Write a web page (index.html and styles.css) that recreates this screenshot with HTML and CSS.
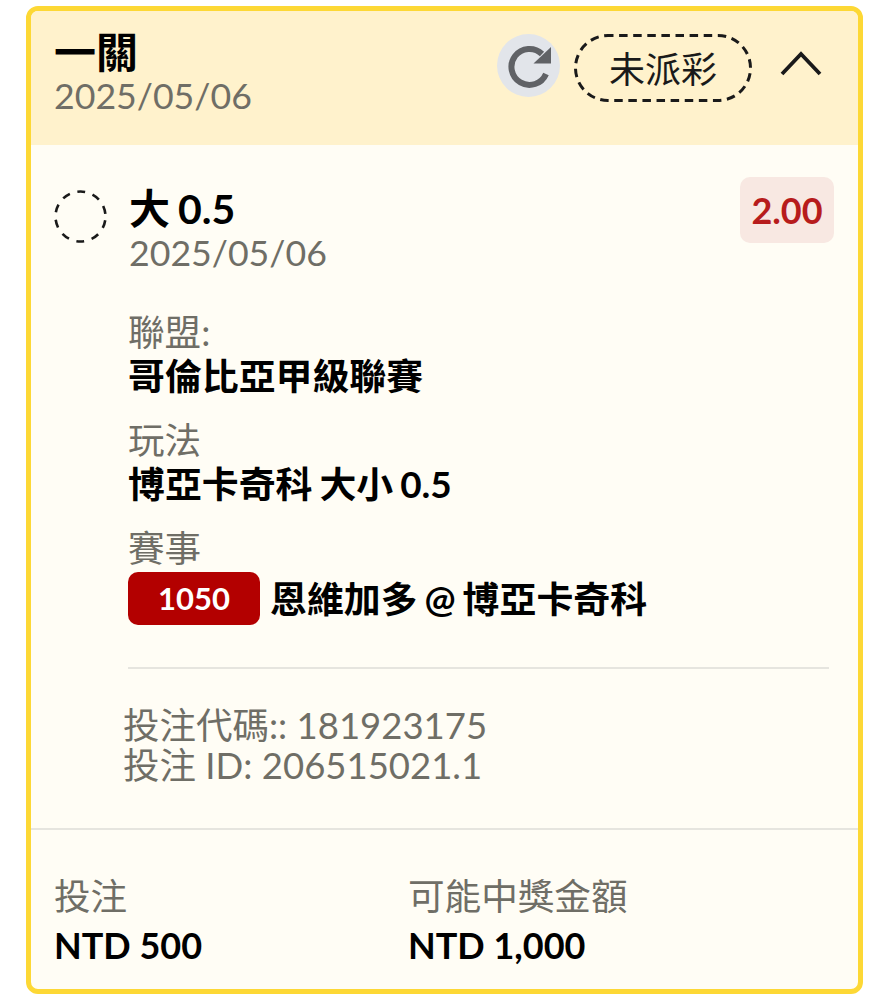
FILE: index.html
```html
<!DOCTYPE html>
<html>
<head>
    <meta charset="utf-8">
    <meta name="viewport" content="width=device-width, initial-scale=1.0">
    <title>一關</title>
    <link rel="stylesheet" href="styles.css">
</head>
<body>
    <div class="card">

        <div class="card-head">
            <div class="head-text">
                <div class="head-title">一關</div>
                <div class="date">2025/05/06</div>
            </div>
            <div class="head-tools">
                <div class="refresh">
                    <svg width="48" height="48" viewBox="0 0 48 48">
                        <path d="M37 12A18 18 0 1 0 41 32" fill="none" stroke="#606266" stroke-width="6"/>
                        <path d="M46 5V21.5H28.5z" fill="#606266"/>
                    </svg>
                </div>
                <div class="status">
                    <svg class="status-line" width="178" height="68" viewBox="0 0 178 68">
                        <rect x="1.5" y="1.5" width="175" height="65" rx="32.5" fill="none" stroke="#1a1a1a" stroke-width="3" stroke-dasharray="8.5 5.6" stroke-dashoffset="3"/>
                    </svg>
                    未派彩
                </div>
                <svg class="chevron" width="44" height="26" viewBox="0 0 44 26">
                    <path d="M3 23L22 3L41 23" fill="none" stroke="#1a1a1a" stroke-width="3.8"/>
                </svg>
            </div>
        </div>

        <div class="card-body">
            <div class="pick">
                <svg class="pick-dot" width="53" height="53" viewBox="0 0 53 53">
                    <circle cx="26.5" cy="26.5" r="25" fill="none" stroke="#1a1a1a" stroke-width="2.6" stroke-dasharray="8 7.71" stroke-dashoffset="-3.84"/>
                </svg>
                <div class="pick-text">
                    <div class="pick-name">大 0.5</div>
                    <div class="date">2025/05/06</div>
                </div>
                <div class="odds">2.00</div>
            </div>

            <div class="details">
                <div class="label">聯盟:</div>
                <div class="value">哥倫比亞甲級聯賽</div>

                <div class="label gap">玩法</div>
                <div class="value">博亞卡奇科 大小 0.5</div>

                <div class="label gap">賽事</div>
                <div class="match">
                    <span class="match-no">1050</span>
                    <span class="value">恩維加多 @ 博亞卡奇科</span>
                </div>
            </div>

            <div class="ids">
                <div>投注代碼:: 181923175</div>
                <div>投注 ID: 206515021.1</div>
            </div>
        </div>

        <div class="card-foot">
            <div class="foot-col">
                <div class="label">投注</div>
                <div class="amount">NTD 500</div>
            </div>
            <div class="foot-col">
                <div class="label">可能中獎金額</div>
                <div class="amount">NTD 1,000</div>
            </div>
        </div>

    </div>
</body>
</html>
```
FILE: styles.css
```css
* {
    box-sizing: border-box;
}

body {
    margin: 0;
    padding: 6px 18px 6px 26px;
    background: #ffffff;
    font-family: "Lato", "Noto Sans CJK TC", sans-serif;
    color: #000000;
}

.card {
    height: 988px;
    border: 5px solid #fdd835;
    border-radius: 12px;
    background: #fffdf5;
    overflow: hidden;
    display: flex;
    flex-direction: column;
}

.card-head {
    height: 134px;
    padding: 17px 24px 0 23px;
    background: #fff2cc;
    display: flex;
    justify-content: space-between;
}

.head-title {
    font-size: 42px;
    font-weight: 700;
    line-height: 49px;
}

.date {
    font-size: 35.7px;
    line-height: 38px;
    color: #6f6e66;
}

.head-tools {
    display: flex;
    align-items: flex-start;
    padding-top: 6px;
}

.refresh {
    width: 63px;
    height: 63px;
    border-radius: 50%;
    background: #e2e5ea;
    display: flex;
    align-items: center;
    justify-content: center;
}

.status {
    position: relative;
    width: 178px;
    height: 68px;
    margin-left: 14px;
    font-size: 36px;
    line-height: 70px;
    text-align: center;
    color: #1a1a1a;
}

.status-line {
    position: absolute;
    left: 0;
    top: 0;
}

.chevron {
    margin: 17px 11px 0 27px;
}

.card-body {
    flex: 1;
    padding: 32px 24px 0 23px;
}

.pick {
    display: flex;
    align-items: flex-start;
}

.pick-dot {
    margin-top: 13px;
}

.pick-text {
    flex: 1;
    margin: 6px 0 0 22px;
}

.pick-name {
    font-size: 41px;
    font-weight: 700;
    line-height: 51px;
    word-spacing: -2px;
}

.odds {
    width: 94px;
    height: 66px;
    border-radius: 10px;
    background: #f8e8e2;
    color: #b71c1c;
    font-size: 36px;
    font-weight: 700;
    line-height: 66px;
    text-align: center;
}

.details {
    margin: 38px 5px 0 74px;
    padding-bottom: 42px;
    border-bottom: 2px solid #e6e5df;
}

.label {
    font-size: 36.6px;
    line-height: 44px;
    color: #6f6e66;
}

.label.gap {
    margin-top: 20px;
}

.value {
    font-size: 36.9px;
    font-weight: 700;
    line-height: 44px;
    word-spacing: -2px;
}

.match {
    margin-top: 2px;
    display: flex;
    align-items: center;
    gap: 10px;
}

.match-no {
    width: 132px;
    height: 53px;
    border-radius: 10px;
    background: #b30000;
    color: #ffffff;
    font-size: 31px;
    font-weight: 700;
    line-height: 53px;
    text-align: center;
}

.ids {
    margin: 36px 0 0 69px;
    font-size: 36.5px;
    line-height: 40px;
    color: #6f6e66;
}

.card-foot {
    height: 161px;
    padding: 44px 24px 0 23px;
    border-top: 2px solid #e6e5df;
    display: flex;
}

.foot-col {
    width: 354px;
}

.amount {
    margin-top: 2px;
    font-size: 36px;
    font-weight: 700;
    line-height: 50px;
}
```
